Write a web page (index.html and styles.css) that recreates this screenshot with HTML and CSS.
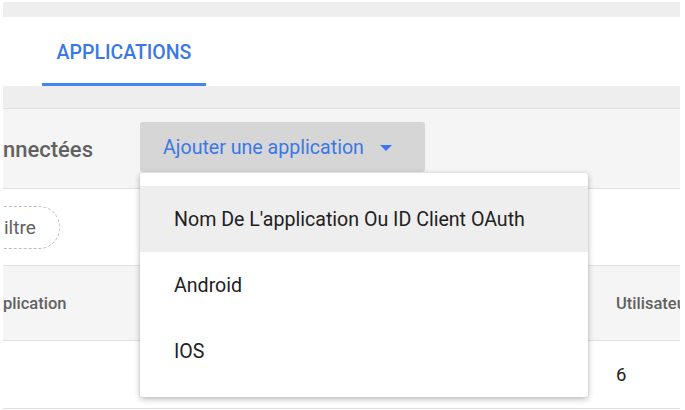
FILE: index.html
```html
<!DOCTYPE html>
<html lang="fr">
<head>
<meta charset="utf-8">
<link rel="stylesheet" href="styles.css">
</head>
<body>
<div class="page">
  <div class="topbar"></div>
  <div class="tabs">
    <div class="tab active">APPLICATIONS</div>
  </div>
  <div class="band"></div>
  <div class="header-row">
    <div class="title">nnectées</div>
    <div class="add-btn">
      <span>Ajouter une application</span>
      <span class="caret"></span>
    </div>
  </div>
  <div class="filter-row">
    <div class="chip">iltre</div>
  </div>
  <div class="table-head">
    <div class="col-name">plication</div>
    <div class="col-users">Utilisateurs</div>
  </div>
  <div class="table-row">
    <div class="col-name"></div>
    <div class="col-users cell">6</div>
  </div>
  <div class="menu">
    <div class="menu-item hover">Nom De L'application Ou ID Client OAuth</div>
    <div class="menu-item">Android</div>
    <div class="menu-item">IOS</div>
  </div>
</div>
</body>
</html>
```
FILE: styles.css
```css
html, body {
  margin: 0;
  padding: 0;
  background: #ffffff;
}
body {
  font-family: Roboto, "Noto Sans", sans-serif;
  width: 685px;
  height: 410px;
  overflow: hidden;
}
.page {
  position: relative;
  padding: 2px 5px 0 3px;
  height: 408px;
  overflow: hidden;
}
.topbar {
  height: 15px;
  background: #eeeeee;
}
.tabs {
  height: 69px;
  display: flex;
  align-items: stretch;
  background: #ffffff;
}
.tab {
  margin-left: 39px;
  width: 164px;
  box-sizing: border-box;
  display: flex;
  align-items: center;
  justify-content: center;
  font-size: 19.5px;
  font-weight: 500;
  color: #3b78e7;
  padding-top: 4px;
}
.tab.active {
  border-bottom: 3px solid #4285f4;
}
.band {
  height: 22px;
  background: #eeeeee;
  border-bottom: 1px solid #e0e0e0;
}
.header-row {
  height: 79px;
  background: #f5f5f5;
  border-bottom: 1px solid #e0e0e0;
  display: flex;
  align-items: center;
}
.title {
  width: 137px;
  font-size: 22px;
  font-weight: 500;
  color: #616161;
  margin-top: 1px;
}
.add-btn {
  width: 285px;
  height: 50px;
  box-sizing: border-box;
  margin-top: -3px;
  background: #d6d6d6;
  border-radius: 3px;
  display: flex;
  align-items: center;
  padding-left: 23px;
  font-size: 19.6px;
  color: #3b78e7;
}
.caret {
  margin-left: 16px;
  width: 0;
  height: 0;
  border-left: 6px solid transparent;
  border-right: 6px solid transparent;
  border-top: 6px solid #3b78e7;
  margin-top: 1px;
}
.filter-row {
  height: 76px;
  background: #ffffff;
  border-bottom: 1px solid #e0e0e0;
  display: flex;
  align-items: center;
  overflow: hidden;
}
.chip {
  margin-left: -30px;
  height: 43px;
  box-sizing: border-box;
  padding: 0 23px 0 30px;
  border: 1px dashed #bdbdbd;
  border-radius: 21px;
  display: flex;
  align-items: center;
  font-size: 19px;
  color: #616161;
}
.table-head {
  height: 74px;
  background: #f5f5f5;
  border-bottom: 1px solid #e0e0e0;
  display: flex;
  align-items: center;
  overflow: hidden;
}
.col-name {
  width: 613px;
  flex: none;
}
.table-head .col-name,
.table-head .col-users {
  font-size: 16.5px;
  font-weight: 500;
  color: #616161;
}
.col-users {
  white-space: nowrap;
}
.table-row {
  height: 67px;
  border-bottom: 1px solid #e0e0e0;
  display: flex;
  align-items: center;
  overflow: hidden;
}
.cell {
  font-size: 18.5px;
  color: #212121;
  margin-top: 0px;
}
.menu {
  position: absolute;
  left: 140px;
  top: 173px;
  width: 448px;
  padding: 13px 0 13px;
  background: #ffffff;
  border-radius: 2px;
  box-shadow: 0 2px 6px rgba(0, 0, 0, 0.28), 0 0 2px rgba(0, 0, 0, 0.1);
}
.menu-item {
  height: 66px;
  display: flex;
  align-items: center;
  padding-left: 34px;
  font-size: 19.6px;
  color: #212121;
}
.menu-item.hover {
  background: #eeeeee;
}
```
